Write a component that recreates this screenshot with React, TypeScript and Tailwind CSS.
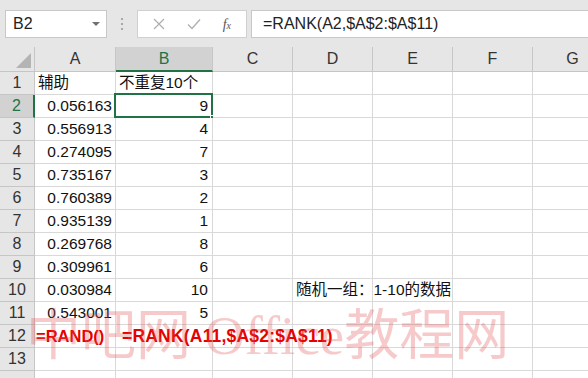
import React from "react"

const colWidths = [35, 81, 97, 80, 80, 80, 80, 80]
const colNames = ["", "A", "B", "C", "D", "E", "F", "G"]

const aValues = ["0.056163", "0.556913", "0.274095", "0.735167", "0.760389", "0.935139", "0.269768", "0.309961", "0.030984", "0.543001"]
const bValues = ["9", "4", "7", "3", "2", "1", "8", "6", "10", "5"]

const font = { fontFamily: '"Liberation Sans", "Noto Sans CJK SC", sans-serif' }

const Toolbar = () => {
    return (
        <div className="h-[47px] bg-[#e6e6e6] flex items-start pt-[10px] shrink-0">
            {/* name box */}
            <div className="ml-[5px] w-[102px] h-[28px] bg-white border border-[#c8c8c8] flex items-center pl-[7px] pr-[6px]">
                <span className="text-[16px] text-[#222] flex-1">B2</span>
                <span className="w-0 h-0 border-l-[4px] border-r-[4px] border-t-[4px] border-l-transparent border-r-transparent border-t-[#707070]"></span>
            </div>
            {/* grip dots */}
            <div className="w-[30px] h-[28px] flex flex-col items-center justify-center gap-[3px]">
                <span className="w-[2px] h-[2px] bg-[#a8a8a8]"></span>
                <span className="w-[2px] h-[2px] bg-[#a8a8a8]"></span>
                <span className="w-[2px] h-[2px] bg-[#a8a8a8]"></span>
            </div>
            {/* formula buttons */}
            <div className="w-[110px] h-[28px] bg-white border border-[#d0d0d0] flex items-center justify-around px-[4px]">
                <svg width="12" height="12" viewBox="0 0 12 12">
                    <path d="M1 1 L11 11 M11 1 L1 11" stroke="#b0b0b0" strokeWidth="1.3" fill="none" />
                </svg>
                <svg width="14" height="12" viewBox="0 0 14 12">
                    <path d="M1 6.5 L5 10.5 L13 1.5" stroke="#b0b0b0" strokeWidth="1.4" fill="none" />
                </svg>
                <span className="text-[14px] italic text-[#555]" style={{ fontFamily: '"Liberation Serif", serif' }}>
                    f<span className="text-[10px]">x</span>
                </span>
            </div>
            {/* formula input */}
            <div className="ml-[4px] flex-1 h-[28px] bg-white border border-[#c8c8c8] border-r-0 flex items-center pl-[11px]">
                <span className="text-[16px] text-[#222]">=RANK(A2,$A$2:$A$11)</span>
            </div>
        </div>
    )
}

const HeaderRow = () => {
    return (
        <div className="flex h-[25px] shrink-0">
            {colNames.map((name, i) => {
                if (i === 0) {
                    return (
                        <div key={i} className="relative w-[35px] shrink-0 bg-[#e6e6e6] border-r border-b border-[#c6c6c6]">
                            <svg className="absolute right-[3px] bottom-[3px]" width="15" height="15" viewBox="0 0 15 15">
                                <path d="M15 0 L15 15 L0 15 Z" fill="#b4b4b4" />
                            </svg>
                        </div>
                    )
                }
                const selected = name === "B"
                return (
                    <div key={i} style={{ width: colWidths[i] }}
                        className={selected
                            ? "shrink-0 bg-[#d2d2d2] border-r border-[#c6c6c6] border-b-2 border-b-[#217346] text-[#217346] flex items-center justify-center text-[16px]"
                            : "shrink-0 bg-[#e6e6e6] border-r border-b border-[#c6c6c6] text-[#333] flex items-center justify-center text-[16px]"}>
                        {name}
                    </div>
                )
            })}
        </div>
    )
}

interface RowProps {
    num: number;
    label: string;
    cells: React.ReactNode[];
}

const Row = ({ num, label, cells }: RowProps) => {
    const selected = num === 2
    return (
        <div className="flex h-[23px] shrink-0">
            <div className={selected
                ? "w-[35px] shrink-0 bg-[#d2d2d2] border-b border-[#c6c6c6] border-r-2 border-r-[#217346] text-[#217346] flex items-center justify-center text-[16px]"
                : "w-[35px] shrink-0 bg-[#e6e6e6] border-r border-b border-[#c6c6c6] text-[#333] flex items-center justify-center text-[16px]"}>
                {label}
            </div>
            {colWidths.slice(1).map((w, i) => (
                <div key={i} style={{ width: w }}
                    className="relative shrink-0 bg-white border-r border-b border-[#d9d9d9] text-[15.5px] text-[#111] leading-[22px]">
                    {cells[i]}
                    {selected && i === 1 && (
                        <>
                            <div className="absolute -left-[2px] -top-[2px] -right-[1px] -bottom-[1px] border-2 border-[#217346]"></div>
                            <div className="absolute -right-[4px] -bottom-[4px] w-[6px] h-[6px] bg-[#217346] border border-white"></div>
                        </>
                    )}
                </div>
            ))}
        </div>
    )
}

const App = () => {
    const rows: React.ReactNode[][] = []
    rows.push([
        <span className="absolute left-[3px] top-0">辅助</span>,
        <span className="absolute left-[3px] top-0 whitespace-nowrap">不重复10个</span>,
    ])
    aValues.forEach((a, i) => {
        const cells: React.ReactNode[] = [
            <span className="absolute right-[3px] top-0">{a}</span>,
            <span className="absolute right-[4px] top-0 z-10">{bValues[i]}</span>,
        ]
        if (i === 8) {
            cells[3] = <span className="absolute left-[3px] top-0 whitespace-nowrap z-10">随机一组：1-10的数据</span>
        }
        rows.push(cells)
    })
    rows.push([
        <span className="absolute left-[1px] top-0 whitespace-nowrap font-bold text-[16.5px] text-[#e60000] z-10">=RAND()</span>,
        <span className="absolute left-[6px] top-0 whitespace-nowrap font-bold text-[17.5px] tracking-[0.2px] text-[#e60000] z-10">=RANK(A11,$A$2:$A$11)</span>,
    ])
    rows.push([])
    rows.push([])

    return (
        <div className="relative w-[588px] h-[378px] overflow-hidden bg-white flex flex-col" style={font}>
            <Toolbar />
            <HeaderRow />
            {rows.map((cells, i) => (
                <Row key={i} num={i + 1} label={i < 13 ? String(i + 1) : ""} cells={cells} />
            ))}
            {/* watermark */}
            <div className="absolute left-[26px] top-[304px] whitespace-nowrap text-[55px] leading-[64px] text-[rgba(225,80,80,0.3)] pointer-events-none z-20"
                style={{ fontFamily: '"Liberation Serif", "Noto Sans CJK SC", serif' }}>
                中吧网 Office教程网
            </div>
        </div>
    )
}

export default App
